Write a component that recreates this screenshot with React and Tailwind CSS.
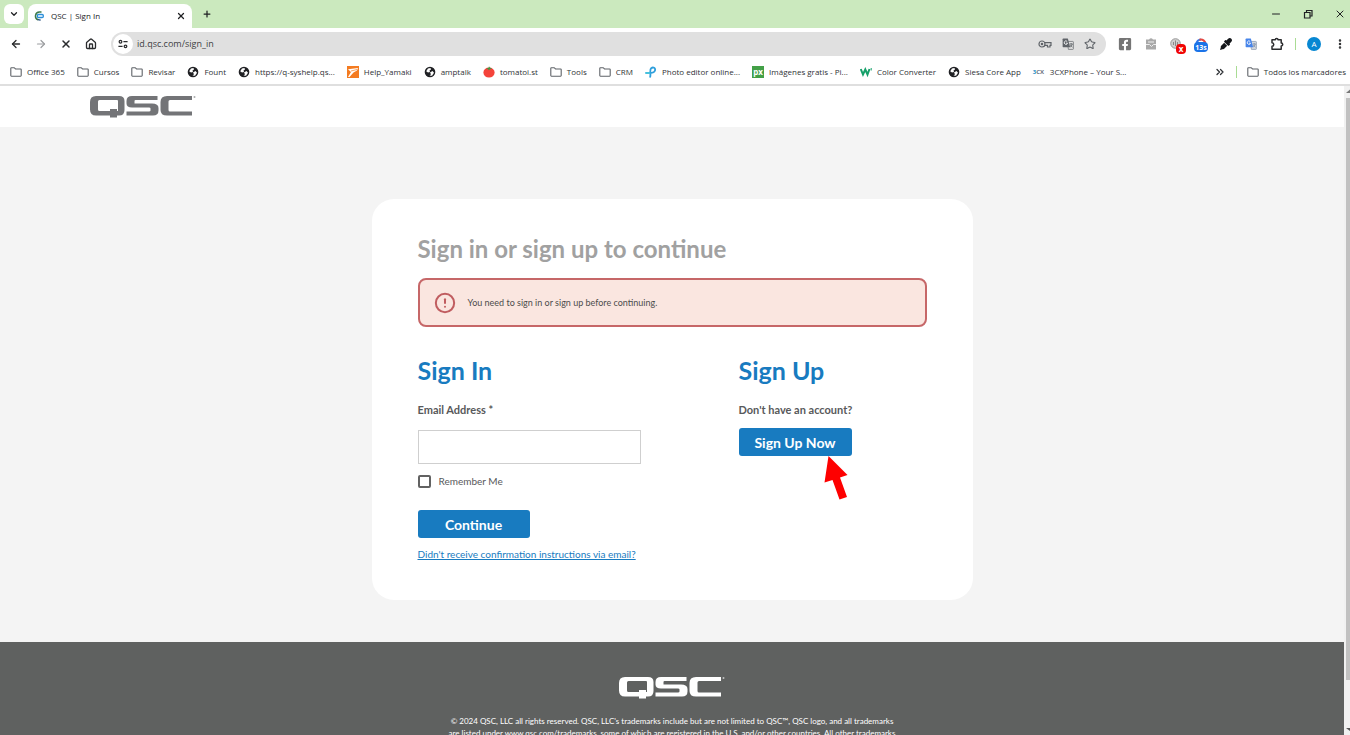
import React from "react";
import {
  ArrowLeft, ArrowRight, X, House, ChevronDown, Plus, Star, Minus,
  EllipsisVertical, ChevronsRight, CircleAlert,
} from "lucide-react";
import { FaFacebookSquare, FaEyeDropper } from "react-icons/fa";

function Logo({ className }) {
  return (
    <svg viewBox="0 0 106 23" className={className} fill="currentColor" role="img" aria-label="QSC">
      <path fillRule="evenodd" d="M6 1H29Q34.500 1 34.500 6V15Q34.500 20.500 29 20.500H27V22.500H20V20.500H6Q0 20.500 0 14.500V7Q0 1 6 1ZM9.500 5Q8 5 8 6.500V14.500Q8 16 9.500 16H20V14H27V16H27.500Q28 16 28 15.500V6Q28 5 27 5Z" />
      <path d="M42 1H67.500V5H45.500Q44.500 5 44.500 6V8.500H62Q68.500 8.500 68.500 13V15.500Q68.500 20.500 63 20.500H36.500V16.500H59Q60.500 16.500 60.500 15.500V13.500Q60.500 12.500 59 12.500H42Q36.500 12.500 36.500 8.500V6Q36.500 1 42 1Z" />
      <path d="M77 1H102V5H80Q78.500 5 78.500 6.500V15Q78.500 16.500 80 16.500H102V20.500H77Q70.500 20.500 70.500 15V7Q70.500 1 77 1Z" />
      <circle cx="104.500" cy="2" r="1" opacity=".6" />
    </svg>
  );
}

const Folder = () => (
  <svg viewBox="0 0 12 12" className="size-3 shrink-0" fill="none" stroke="#5f6368" strokeWidth="1.100">
    <path d="M.8 2.300Q.8 1.700 1.400 1.700H4.200L5.500 3H10.600Q11.200 3 11.200 3.600V9.600Q11.200 10.200 10.600 10.200H1.400Q.8 10.200 .8 9.600Z" />
  </svg>
);
const Globe = () => (
  <svg viewBox="0 0 12 12" className="size-3 shrink-0">
    <circle cx="6" cy="6" r="5.300" fill="#202124" />
    <path d="M2.200 5.200L4 2.600 6.500 2 7 3.500 5.500 4.500 6 6 4 6.500ZM6 6.500L8.500 5 10 6.800 8 9.800 5.500 9.600 7 8.200Z" fill="#fff" />
  </svg>
);
const Yamaki = () => (
  <svg viewBox="0 0 12 12" className="size-3 shrink-0">
    <path fill="#f47b20" d="M0 0H12V12H0Z" />
    <path fill="#fff" d="M1 3.200L11 2 10 4.500 6.500 6.500 2.500 11H1L4 6Z" />
    <path stroke="#f47b20" strokeWidth=".7" d="M4 5L10 3.500" />
  </svg>
);
const Tomato = () => (
  <svg viewBox="0 0 12 12" className="size-3 shrink-0">
    <ellipse cx="6" cy="6.600" rx="5.600" ry="5" fill="#f4433a" />
    <path d="M3 2.300L5.500 2 6 .3 7 1.800 9 2.300 7 3.200 5.800 4.200 5 3.100Z" fill="#3c9a46" />
  </svg>
);
const Ribbon = () => (
  <svg viewBox="0 0 12 12" className="size-3 shrink-0" fill="none" strokeWidth="1.800" strokeLinecap="round">
    <path stroke="#2f9fdc" d="M5.200 10.800C6 8 4.300 4 6.200 2.200C8.200 .6 10.700 2 10 4.400C9.300 6.700 6 7.300 1.200 7" />
    <path stroke="#46c3dc" d="M1.200 7L4.500 7.200" />
  </svg>
);
const Px = () => (
  <span className="flex size-3 shrink-0 items-center justify-center bg-[#43a047] text-[8px] leading-none font-bold text-white">px</span>
);
const Walk = () => (
  <svg viewBox="0 0 12 12" className="size-3 shrink-0" fill="none" stroke="#16a06a" strokeWidth="2">
    <path d="M.8 3L3 8.500 5.300 3.500 7.500 8.500 9.500 3" />
    <path strokeWidth="1" d="M11.200 2V4.500" />
  </svg>
);
const Cx = () => (
  <span className="w-3 shrink-0 text-[6px] leading-none font-bold text-[#6b7280]"><span className="text-[#1c90c9]">3</span>CX</span>
);

const bookmarks = [
  ["Office 365", Folder], ["Cursos", Folder], ["Revisar", Folder], ["Fount", Globe],
  ["https://q-syshelp.qs...", Globe], ["Help_Yamaki", Yamaki], ["amptalk", Globe],
  ["tomatoi.st", Tomato], ["Tools", Folder], ["CRM", Folder], ["Photo editor online...", Ribbon],
  ["Imágenes gratis - Pi...", Px], ["Color Converter", Walk], ["Siesa Core App", Globe],
  ["3CXPhone – Your S...", Cx],
];

function Translate({ className, front, back, lines }) {
  return (
    <svg viewBox="0 0 14 14" className={className} fill="none">
      <path fill={back} stroke={lines} strokeWidth=".8" d="M6 4H12.500Q13.300 4 13.300 4.800V12.500Q13.300 13.300 12.500 13.300H7.500Z" />
      <path fill={front} d="M1.500 .7H6.800L9.500 10.700H1.500Q.7 10.700 .7 9.900V1.500Q.7 .7 1.500 .7Z" />
      <path stroke="#fff" strokeWidth="1" d="M6 4A2 2 0 1 0 6.500 6H4.700" />
      <path stroke={lines} strokeWidth="1" d="M9 7H12.500M10.700 6V7M12 7Q11.500 9.500 9.500 10.500M9.800 8Q10.500 9.800 12.200 10.700" />
    </svg>
  );
}

function TabStrip() {
  return (
    <div className="flex h-7 items-center bg-[#cbe9be] text-[#202124]">
      <button aria-label="Search tabs" className="ml-1 flex size-5 items-center justify-center rounded-md bg-white">
        <ChevronDown className="size-2.5" strokeWidth={3} />
      </button>
      <div className="ml-1 flex h-6 w-41 items-center self-end rounded-t-lg bg-white pr-1.5 pb-px pl-1.5">
        <svg viewBox="0 0 12 12" className="size-2.5" fill="none">
          <path d="M9 1.200H7A4.800 4.800 0 0 0 5 10.500" stroke="#3d7a4c" strokeWidth="1.800" />
          <rect x="4" y="4.200" width="7.200" height="3.600" rx="1.500" stroke="#2b8fd9" strokeWidth="1.600" />
          <path d="M4.500 10.300L8 11" stroke="#1f4a7a" strokeWidth="1.500" />
        </svg>
        <span className="ml-[7px] flex-1 text-[8px]">QSC | Sign In</span>
        <button aria-label="Close tab"><X className="size-2.5" strokeWidth={3} /></button>
      </div>
      <button aria-label="New tab" className="ml-2 p-0.5"><Plus className="size-2.5" strokeWidth={3} /></button>
      <div className="ml-auto flex items-center gap-5 pr-1">
        <button aria-label="Minimize"><Minus className="size-3" /></button>
        <button aria-label="Restore">
          <svg viewBox="0 0 12 12" className="size-3" fill="none" stroke="currentColor" strokeWidth="1.200">
            <path d="M2.500 4.500H8V10H2.500ZM4.500 4.500V2.500H10V8H8" />
          </svg>
        </button>
        <button aria-label="Close window"><X className="size-3" /></button>
      </div>
    </div>
  );
}

function Toolbar() {
  return (
    <div className="flex h-8 items-center bg-white text-[#2b2c2e]">
      <div className="flex items-center gap-[13px] pl-2.5">
        <button aria-label="Back"><ArrowLeft className="size-3" strokeWidth={2.6} /></button>
        <button aria-label="Forward" className="text-[#9a9c9f]"><ArrowRight className="size-3" strokeWidth={2.4} /></button>
        <button aria-label="Stop loading"><X className="size-3" strokeWidth={3} /></button>
        <button aria-label="Home"><House className="size-3" strokeWidth={2.6} /></button>
      </div>
      <div className="ml-3.5 flex h-6 flex-1 items-center rounded-full bg-[#e0e0e0] pr-2.5 pl-0.5">
        <button aria-label="Site information" className="flex size-5 items-center justify-center rounded-full bg-white">
          <svg viewBox="0 0 12 12" className="size-2.5" fill="none" stroke="currentColor" strokeWidth="1.500">
            <circle cx="3" cy="3.200" r="1.600" /><path d="M6.500 3.200H11.500M.5 8.800H5.500" /><circle cx="9" cy="8.800" r="1.600" />
          </svg>
        </button>
        <input aria-label="Address" defaultValue="id.qsc.com/sign_in" className="ml-1 min-w-0 flex-1 bg-transparent text-[9px] text-[#3f4144] outline-none" />
        <div className="flex items-center gap-2.5 text-[#5f6368]">
          <button aria-label="Passwords">
            <svg viewBox="0 0 14 12" className="h-3 w-3.5" fill="none" stroke="currentColor" strokeWidth="1.200">
              <circle cx="4" cy="6" r="3" /><circle cx="4" cy="6" r=".7" fill="currentColor" />
              <path d="M6.800 4.700H13V7.400H12V9H9.500V7.400H6.800" />
            </svg>
          </button>
          <button aria-label="Translate page"><Translate className="size-3" front="#5f6368" back="none" lines="#5f6368" /></button>
          <button aria-label="Bookmark page"><Star className="size-3" strokeWidth={2.2} /></button>
        </div>
      </div>
      <div className="ml-3 flex items-center gap-[11px] pr-1">
        <div className="flex items-center gap-[13px]">
          <button aria-label="Facebook" className="text-[#757575]"><FaFacebookSquare className="size-3.5" /></button>
          <button aria-label="Clipboard">
            <svg viewBox="0 0 12 12" className="size-3">
              <path fill="#a9a9a9" d="M1 1.500H4Q6 -.8 8 1.500H11V11.500H1Z" />
              <path fill="none" stroke="#eee" d="M3 4H9M1 6.500H4.500L6.500 8.500 8.500 6.500H11" />
            </svg>
          </button>
          <button aria-label="Blocked" className="relative">
            <svg viewBox="0 0 12 12" className="size-3"><circle cx="5.500" cy="5.500" r="4.800" fill="#cfcfcf" stroke="#9a9a9a" /><path d="M5.500 2.500V8M3.500 4V7M7.500 4V7" stroke="#888" /></svg>
            <span className="absolute top-1.5 left-1.5 flex size-2.5 items-center justify-center rounded-sm bg-[#f00505] text-[8px] leading-none font-bold text-white">x</span>
          </button>
          <button aria-label="Timer" className="relative">
            <svg viewBox="0 0 12 12" className="size-3" fill="none" strokeWidth="2"><path stroke="#3478e5" d="M1.500 6A4.500 4.500 0 0 1 6 1.500" /><path stroke="#e54840" d="M4.500 1.800A4.500 4.500 0 0 1 10.500 6" /></svg>
            <span className="absolute top-1 -left-px flex h-2.5 w-3.5 items-center justify-center rounded-sm bg-[#1a73e8] text-[7px] leading-none font-bold text-white">13s</span>
          </button>
          <button aria-label="Color picker" className="text-[#15171b]"><FaEyeDropper className="size-3" /></button>
          <button aria-label="Translate"><Translate className="size-3" front="#4785ea" back="#d5d9de" lines="#7d8fa8" /></button>
          <button aria-label="Extensions">
            <svg viewBox="0 0 14 14" className="size-3.5" fill="none" stroke="currentColor" strokeWidth="1.500" strokeLinejoin="round">
              <path d="M2 2.800H5.300A1.300 1.300 0 0 1 8 2.800H11.200V6A1.400 1.400 0 0 1 11.200 9V12.300H2V9.300A1.700 1.700 0 0 0 2 5.800Z" />
            </svg>
          </button>
        </div>
        <span className="h-3 w-px bg-[#a9dc94]" />
        <button aria-label="Account" className="flex size-3.5 items-center justify-center rounded-full bg-[#0787d2] text-[8px] leading-none text-white">A</button>
        <button aria-label="Menu" className="ml-0.5"><EllipsisVertical className="size-3" strokeWidth={3} /></button>
      </div>
    </div>
  );
}

function BookmarkBar() {
  return (
    <nav aria-label="Bookmarks" className="flex h-6.5 items-center border-b-2 border-[#dfdfdf] bg-white pb-px pl-2.5 text-[8px] whitespace-nowrap text-[#2f3236]">
      <ul className="flex min-w-0 gap-3">
        {bookmarks.map(([name, Icon]) => (
          <li key={name}>
            <a href="#" className="flex items-center gap-[5px]"><Icon />{name}</a>
          </li>
        ))}
      </ul>
      <div className="ml-auto flex items-center gap-2.5 pr-1">
        <button aria-label="More bookmarks"><ChevronsRight className="size-3" strokeWidth={2.6} /></button>
        <span className="h-3 w-px bg-[#a9dc94]" />
        <a href="#" className="flex items-center gap-[5px]"><Folder />Todos los marcadores</a>
      </div>
    </nav>
  );
}

function SignInCard() {
  return (
    <section className="relative w-[601px] rounded-[22px] bg-white px-[46px] pt-[34px] pb-[38px] text-[#58595b]">
      <h1 className="text-[24px] leading-8 font-bold text-[#a1a1a1]">Sign in or sign up to continue</h1>
      <div role="alert" className="mt-[13px] flex h-[49px] items-center gap-3 rounded-lg border-2 border-[#c66768] bg-[#fae6e0] px-3.5 text-[9px] text-[#4c4c4c]">
        <CircleAlert className="size-[22px] text-[#c05d60]" strokeWidth={2.2} />
        You need to sign in or sign up before continuing.
      </div>
      <div className="mt-[27px] flex">
        <form className="w-[223px]" onSubmit={(e) => e.preventDefault()}>
          <h2 className="text-[25px] leading-8 font-bold text-[#187bc0]">Sign In</h2>
          <label htmlFor="email" className="mt-4 block text-[11px] leading-4 font-bold">Email Address *</label>
          <input id="email" type="email" className="mt-3 block h-[34px] w-full border border-[#cfcfcf] px-2 text-sm outline-none" />
          <label className="mt-[9px] flex items-center gap-2 text-[10px] leading-4">
            <input type="checkbox" className="size-[13px] appearance-none rounded-[2px] border-2 border-[#626262] bg-white" />
            Remember Me
          </label>
          <button className="mt-[21px] flex h-7 w-28 items-center justify-center rounded-[3px] bg-[#187bc0] text-[14px] font-bold text-white">Continue</button>
          <a href="#" className="mt-2 block text-[10px] leading-4 whitespace-nowrap text-[#187bc0] underline">Didn't receive confirmation instructions via email?</a>
        </form>
        <div className="ml-[98px]">
          <h2 className="text-[25px] leading-8 font-bold text-[#187bc0]">Sign Up</h2>
          <p className="mt-4 text-[11px] leading-4 font-bold">Don't have an account?</p>
          <div className="relative mt-2.5">
            <button className="flex h-7 w-[113px] items-center justify-center rounded-[3px] bg-[#187bc0] text-[14px] font-bold text-white">Sign Up Now</button>
            <svg viewBox="0 0 23 44" className="absolute top-7 left-[85px] h-11 w-6" fill="#fe0000" aria-hidden="true">
              <path d="M4 0L23 19 15.500 21.500 22.500 41 15 43.500 8 24 0 26.500Z" />
            </svg>
          </div>
        </div>
      </div>
    </section>
  );
}

export default function App() {
  return (
    <div className="flex h-screen flex-col overflow-hidden bg-white font-['Open_Sans',sans-serif]">
      <TabStrip />
      <Toolbar />
      <BookmarkBar />
      <div className="flex min-h-0 flex-1">
        <div className="min-w-0 flex-1 overflow-hidden font-['Lato',sans-serif]">
          <header className="flex h-[41px] items-center bg-white pl-[90px]">
            <a href="#" aria-label="QSC home"><Logo className="h-[23px] w-[106px] text-[#737477]" /></a>
          </header>
          <main className="flex justify-center bg-[#f4f4f4] pt-[72px] pb-[42px]">
            <SignInCard />
          </main>
          <footer className="flex flex-col items-center bg-[#5f6160] pt-[34px] pb-10 text-white">
            <Logo className="h-[23px] w-[106px]" />
            <p className="mt-4 w-[450px] text-center text-[8px] leading-3">
              © 2024 QSC, LLC all rights reserved. QSC, LLC's trademarks include but are not limited to QSC™, QSC logo, and all trademarks
              are listed under www.qsc.com/trademarks, some of which are registered in the U.S. and/or other countries. All other trademarks
              are the property of their respective owners.
            </p>
          </footer>
        </div>
        <div aria-hidden="true" className="flex w-1.5 flex-col items-end overflow-hidden bg-[#f1f1f1]">
          <svg viewBox="0 0 4 12" className="h-3 w-1"><path d="M0 7L4 3.500V7Z" fill="#777" /></svg>
          <span className="h-[582px] w-1 bg-[#c1c1c1]" />
          <svg viewBox="0 0 4 12" className="mt-auto h-3 w-1"><path d="M0 5H4V8Z" fill="#555" /></svg>
        </div>
      </div>
    </div>
  );
}
